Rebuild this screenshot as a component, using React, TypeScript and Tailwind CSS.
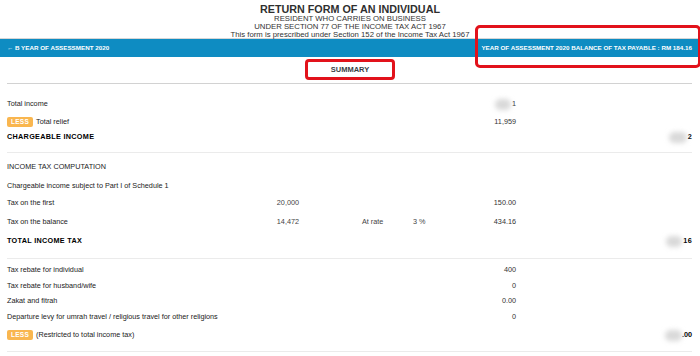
import React from "react";

const Blob = ({ w = 17 }: { w?: number }) => (
  <span className="inline-block h-[11px] rounded-full bg-[#d9d9d9] blur-[2.5px] align-middle" style={{ width: w }} />
);

const Less = () => (
  <span className="inline-flex h-[10px] w-[26px] items-center justify-center rounded-[2px] bg-[#f9b64f] text-[6.5px] font-bold tracking-[0.3px] text-white">
    LESS
  </span>
);

type RowProps = {
  mt: string;
  label: React.ReactNode;
  c2?: React.ReactNode;
  c3?: React.ReactNode;
  c4?: React.ReactNode;
  c5?: React.ReactNode;
  c6?: React.ReactNode;
  bold?: boolean;
};

const Row = ({ mt, label, c2, c3, c4, c5, c6, bold }: RowProps) => (
  <div
    className={`${mt} grid h-[14px] grid-cols-[230px_62px_114px_47px_56px_1fr] items-center text-[7.25px] text-[#222] ${bold ? "font-bold tracking-[0.3px] text-black" : ""}`}
  >
    <div className="flex items-center gap-[2px] whitespace-nowrap">{label}</div>
    <div className="text-right text-[#444]">{c2}</div>
    <div className="pl-[63px] text-[#444]">{c3}</div>
    <div className="text-[#444]">{c4}</div>
    <div className="flex items-center justify-end text-[#333]">{c5}</div>
    <div className="flex items-center justify-end">{c6}</div>
  </div>
);

const Divider = ({ mt }: { mt: string }) => <div className={`${mt} h-px bg-[#ebebeb]`} />;

export default function App() {
  return (
    <div
      className="relative h-[356px] w-[700px] overflow-hidden bg-white"
      style={{ fontFamily: '"Liberation Sans", Arial, sans-serif' }}
    >
      {/* Header */}
      <div className="flex flex-col items-center pt-[3px] text-[#333]">
        <div className="h-[12px] text-[10.75px] font-bold leading-[12px] text-[#2f2f2f]">RETURN FORM OF AN INDIVIDUAL</div>
        <div className="h-[8px] text-[7.75px] leading-[8px]">RESIDENT WHO CARRIES ON BUSINESS</div>
        <div className="h-[8px] text-[7.75px] leading-[8px]">UNDER SECTION 77 OF THE INCOME TAX ACT 1967</div>
        <div className="h-[7px] text-[7.75px] leading-[7px]">This form is prescribed under Section 152 of the Income Tax Act 1967</div>
      </div>

      {/* Blue bar */}
      <div className="flex h-[19px] items-center justify-between border-t border-[#d6d6d6] bg-[#0e8cc2] pl-[7px] pr-[8px] text-[6.25px] font-bold text-white">
        <span>← B YEAR OF ASSESSMENT 2020</span>
        <span>YEAR OF ASSESSMENT 2020 BALANCE OF TAX PAYABLE : RM 184.16</span>
      </div>

      {/* Summary */}
      <div className="flex justify-center pt-[2px]">
        <div className="flex h-[21px] w-[90px] items-center justify-center rounded-[4px] border-[3px] border-[#e2121b] text-[7.5px] font-bold text-[#3a3f45]">
          SUMMARY
        </div>
      </div>

      <div className="px-[7px] pr-[8px]">
        <div className="mt-[3px] h-px bg-[#d2d2d2]" />

        <Row mt="mt-[13px]" label="Total income" c5={<><Blob w={16} /><span className="ml-[1px]">1</span></>} />
        <Row mt="mt-[4px]" label={<><Less /><span className="ml-[1px]">Total relief</span></>} c5="11,959" />
        <Row mt="mt-[1px]" bold label="CHARGEABLE INCOME" c6={<><Blob w={18} /><span className="ml-[1px]">2</span></>} />

        <Divider mt="mt-[8px]" />

        <Row mt="mt-[7px]" label="INCOME TAX COMPUTATION" />
        <Row mt="mt-[5px]" label="Chargeable income subject to Part I of Schedule 1" />
        <Row mt="mt-[3px]" label="Tax on the first" c2="20,000" c5="150.00" />
        <Row mt="mt-[5px]" label="Tax on the balance" c2="14,472" c3="At rate" c4="3 %" c5="434.16" />
        <Row mt="mt-[5px]" bold label="TOTAL INCOME TAX" c6={<><Blob w={16} /><span className="ml-[1px]">16</span></>} />

        <Divider mt="mt-[10px]" />

        <Row mt="mt-[4px]" label="Tax rebate for individual" c5="400" />
        <Row mt="mt-[2px]" label="Tax rebate for husband/wife" c5="0" />
        <Row mt="mt-[1px]" label="Zakat and fitrah" c5="0.00" />
        <Row mt="mt-[2px]" label="Departure levy for umrah travel / religious travel for other religions" c5="0" />
        <Row
          mt="mt-[4px]"
          label={<><Less /><span className="ml-[1px]">(Restricted to total income tax)</span></>}
          c6={<><Blob w={17} /><span className="font-bold text-black">.00</span></>}
        />

        <Divider mt="mt-[9px]" />
      </div>

      {/* Annotation box */}
      <div className="absolute left-[475px] top-[25px] h-[43px] w-[226px] rounded-[5px] border-[3px] border-[#e2121b]" />
    </div>
  );
}
